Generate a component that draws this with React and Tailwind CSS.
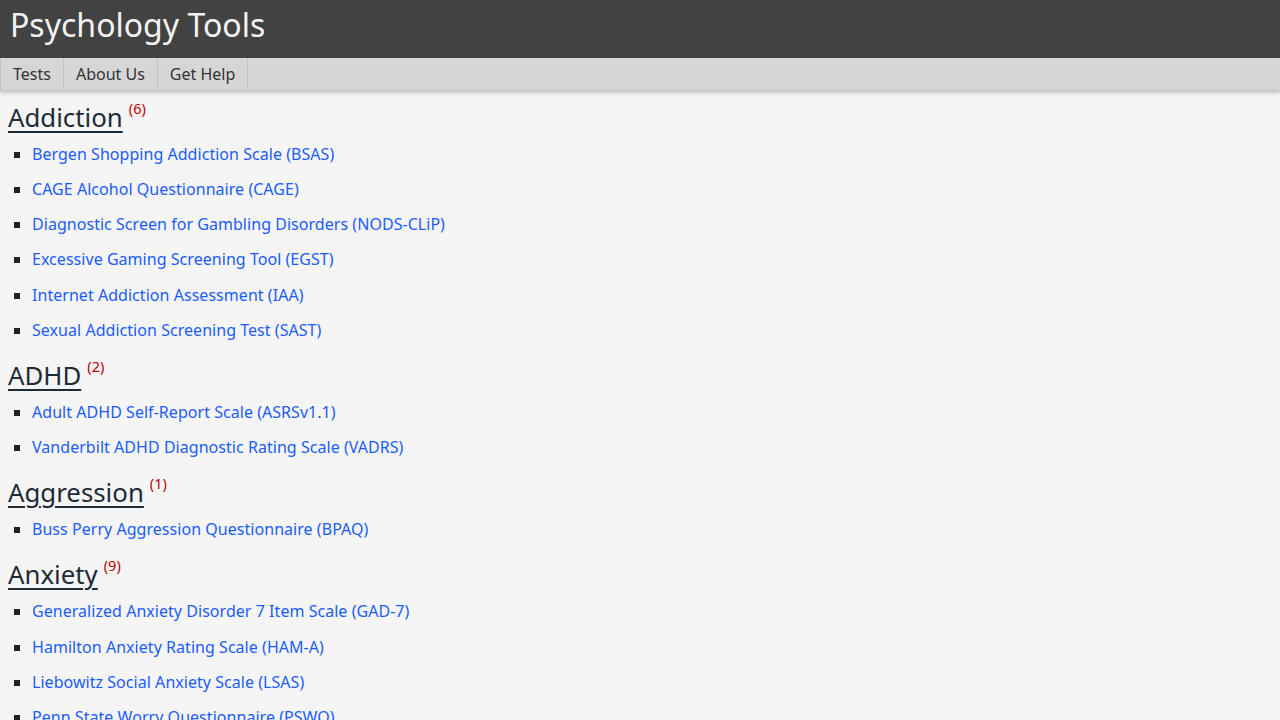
const sections = [
  {
    title: "Addiction",
    tests: [
      "Bergen Shopping Addiction Scale (BSAS)",
      "CAGE Alcohol Questionnaire (CAGE)",
      "Diagnostic Screen for Gambling Disorders (NODS-CLiP)",
      "Excessive Gaming Screening Tool (EGST)",
      "Internet Addiction Assessment (IAA)",
      "Sexual Addiction Screening Test (SAST)",
    ],
  },
  {
    title: "ADHD",
    tests: [
      "Adult ADHD Self-Report Scale (ASRSv1.1)",
      "Vanderbilt ADHD Diagnostic Rating Scale (VADRS)",
    ],
  },
  {
    title: "Aggression",
    tests: ["Buss Perry Aggression Questionnaire (BPAQ)"],
  },
  {
    title: "Anxiety",
    count: 9,
    tests: [
      "Generalized Anxiety Disorder 7 Item Scale (GAD-7)",
      "Hamilton Anxiety Rating Scale (HAM-A)",
      "Liebowitz Social Anxiety Scale (LSAS)",
      "Penn State Worry Questionnaire (PSWQ)",
      "Severity Measure for Panic Disorder (SMPD)",
      "Social Phobia Inventory (SPIN)",
    ],
  },
];

export default function App() {
  return (
    <div className="min-h-screen bg-[#f5f5f5] font-['Noto_Sans',sans-serif]">
      <header className="h-[58px] bg-[#424242] px-[10px] flex items-center">
        <h1 className="text-[32px] leading-none text-[#f2f2f2] -mt-[8px]">Psychology Tools</h1>
      </header>

      <nav className="h-[33px] bg-[#d6d6d6] border-b border-[#c4c4c4] shadow-[0_2px_4px_rgba(0,0,0,0.2)] flex relative z-10">
        {["Tests", "About Us", "Get Help"].map((n) => (
          <a
            key={n}
            href="#"
            className="px-[12px] border-l border-r border-[#c2c2c2] -mr-px text-[16px] leading-[32px] text-[#333]"
          >
            {n}
          </a>
        ))}
      </nav>

      <main className="px-[8px] pt-[10px]">
        {sections.map((s) => (
          <section key={s.title} className="mb-[11px]">
            <h2 className="text-[25.8px] leading-[32px] text-[#1f2a37]">
              <a href="#" className="underline decoration-2 underline-offset-[4px]">{s.title}</a>
              <sup className="text-[14.5px] text-[#c00000] ml-[6px] -top-[13px] relative align-baseline">
                ({s.count ?? s.tests.length})
              </sup>
            </h2>
            <ul className="mt-[4px] list-[square] pl-[24px] marker:text-[#222]">
              {s.tests.map((t) => (
                <li key={t} className="leading-[35.15px] text-[16px]">
                  <a href="#" className="text-[#1a5cff] tracking-[0.04px]">{t}</a>
                </li>
              ))}
            </ul>
          </section>
        ))}
      </main>
    </div>
  );
}
